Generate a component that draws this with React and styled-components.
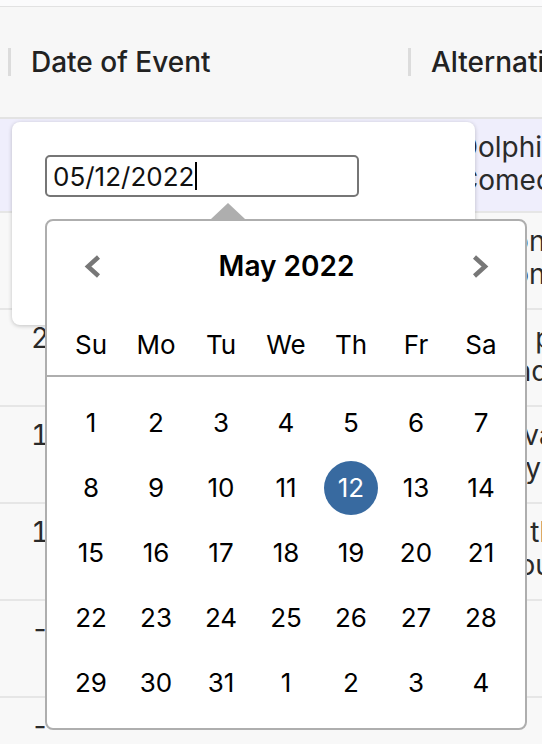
import React from 'react';
import styled, { createGlobalStyle } from 'styled-components';

const GlobalStyle = createGlobalStyle`
  html, body {
    margin: 0;
    padding: 0;
  }
  body {
    background: #f8f8f8;
    font-family: Inter, "Noto Sans", sans-serif;
    color: #222;
    overflow: hidden;
  }
`;

const Page = styled.div`
  position: relative;
  width: 542px;
  height: 744px;
  overflow: hidden;
`;

const TopStrip = styled.div`
  height: 6px;
  background: #fbfbfc;
  border-bottom: 1px solid #e2e2e2;
`;

const Row = styled.div`
  display: grid;
  grid-template-columns: 400px 600px;
  box-sizing: border-box;
`;

const HeaderRow = styled(Row)`
  height: 112px;
  background: #f7f7f7;
  border-bottom: 2px solid #e3e3e3;
`;

const HeaderCell = styled.div`
  display: flex;
  align-items: center;
  gap: 20px;
  padding-left: 8px;
`;

const Separator = styled.span`
  width: 3px;
  height: 28px;
  background: #dcdcdc;
`;

const HeaderTitle = styled.span`
  font-size: 28px;
  font-weight: 500;
  color: #222;
  white-space: nowrap;
`;

const BodyRow = styled(Row)`
  height: ${p => p.$height}px;
  background: ${p => (p.$selected ? '#efeefc' : '#f8f8f8')};
  border-bottom: 2px solid #e6e6e6;
`;

const Cell = styled.div`
  padding: 12px 31px 0;
  font-size: 28px;
  line-height: 33px;
  color: #2a2a2a;
  font-variant-numeric: tabular-nums;
  white-space: nowrap;
  overflow: hidden;
`;

const Line = styled.div``;

const EditorCard = styled.div`
  position: absolute;
  left: 12px;
  top: 122px;
  width: 463px;
  height: 203px;
  box-sizing: border-box;
  padding: 33px;
  background: #fff;
  border-radius: 8px;
  box-shadow: 0 1px 4px rgba(0, 0, 0, 0.22);
`;

const DateField = styled.div`
  display: flex;
  align-items: center;
  width: 314px;
  height: 42px;
  box-sizing: border-box;
  padding: 0 6px;
  border: 2px solid #767676;
  border-radius: 5px;
  font-size: 26px;
  color: #111;
`;

const Caret = styled.span`
  display: inline-block;
  width: 2px;
  height: 28px;
  margin-left: 1px;
  background: #000;
`;

const Calendar = styled.div`
  position: absolute;
  left: 45px;
  top: 219px;
  width: 482px;
  box-sizing: border-box;
  background: #fff;
  border: 2px solid #aeaeae;
  border-radius: 8px;

  &::before {
    content: '';
    position: absolute;
    top: -18px;
    left: 164px;
    border-left: 17px solid transparent;
    border-right: 17px solid transparent;
    border-bottom: 16px solid #aeaeae;
  }
`;

const CalendarHeader = styled.div`
  padding: 30px 0 11px;
  border-bottom: 2px solid #aeaeae;
`;

const MonthRow = styled.div`
  display: flex;
  align-items: center;
  justify-content: space-between;
  height: 30px;
  padding: 0 36px 0 37px;
`;

const MonthTitle = styled.span`
  font-size: 28px;
  font-weight: 600;
  color: #000;
`;

const NavButton = styled.button`
  display: flex;
  padding: 0;
  border: 0;
  background: none;
  cursor: pointer;
`;

const WeekGrid = styled.div`
  display: grid;
  grid-template-columns: repeat(7, 65px);
  justify-content: center;
`;

const DayNames = styled(WeekGrid)`
  margin-top: 43px;
  height: 40px;
  align-items: center;
  text-align: center;
  font-size: 26px;
  color: #000;
`;

const DaysGrid = styled(WeekGrid)`
  grid-auto-rows: 65px;
  padding: 13px 0;
`;

const DayCell = styled.div`
  display: flex;
  align-items: center;
  justify-content: center;
`;

const DayNum = styled.span`
  display: flex;
  align-items: center;
  justify-content: center;
  width: 54px;
  height: 54px;
  border-radius: 50%;
  font-size: 26px;
  background: ${p => (p.$selected ? '#386aa0' : 'transparent')};
  color: ${p => (p.$selected ? '#fff' : '#000')};
`;

const Chevron = ({ dir }) => (
  <svg width="17" height="23" viewBox="0 0 17 23">
    <polyline
      points={dir === 'left' ? '14.5,2 4,11.5 14.5,21' : '2.5,2 13,11.5 2.5,21'}
      fill="none"
      stroke="#777"
      strokeWidth="4.5"
    />
  </svg>
);

const rows = [
  { date: '', alt: ['A Dolphin Tale', 'A Comedy Night'], height: 94, selected: true },
  { date: '', alt: ['The Lion King', 'Red Lion Inn'], height: 97 },
  { date: '2022-04-30', alt: ['Garden party', 'Highland Games'], height: 97 },
  { date: '12/03/2021', alt: ['Il Carnivale', 'Birthday'], height: 97 },
  { date: '10/18/2021', alt: ['Across the', 'Tree House'], height: 97 },
  { date: '-', alt: ['', ''], height: 97 },
  { date: '-', alt: ['', ''], height: 97 },
];

const weekDays = ['Su', 'Mo', 'Tu', 'We', 'Th', 'Fr', 'Sa'];
const days = [...Array.from({ length: 31 }, (_, i) => i + 1), 1, 2, 3, 4];

export default function App() {
  return (
    <Page>
      <GlobalStyle />
      <TopStrip />
      <HeaderRow>
        <HeaderCell>
          <Separator />
          <HeaderTitle>Date of Event</HeaderTitle>
        </HeaderCell>
        <HeaderCell>
          <Separator />
          <HeaderTitle>Alternative Title</HeaderTitle>
        </HeaderCell>
      </HeaderRow>
      {rows.map((r, i) => (
        <BodyRow key={i} $height={r.height} $selected={r.selected}>
          <Cell>{r.date}</Cell>
          <Cell>
            <Line>{r.alt[0]}</Line>
            <Line>{r.alt[1]}</Line>
          </Cell>
        </BodyRow>
      ))}

      <EditorCard>
        <DateField role="textbox">
          05/12/2022
          <Caret />
        </DateField>
      </EditorCard>

      <Calendar>
        <CalendarHeader>
          <MonthRow>
            <NavButton aria-label="Previous Month">
              <Chevron dir="left" />
            </NavButton>
            <MonthTitle>May 2022</MonthTitle>
            <NavButton aria-label="Next Month">
              <Chevron dir="right" />
            </NavButton>
          </MonthRow>
          <DayNames>
            {weekDays.map(d => (
              <span key={d}>{d}</span>
            ))}
          </DayNames>
        </CalendarHeader>
        <DaysGrid>
          {days.map((d, i) => (
            <DayCell key={i}>
              <DayNum $selected={i === 11}>{d}</DayNum>
            </DayCell>
          ))}
        </DaysGrid>
      </Calendar>
    </Page>
  );
}
